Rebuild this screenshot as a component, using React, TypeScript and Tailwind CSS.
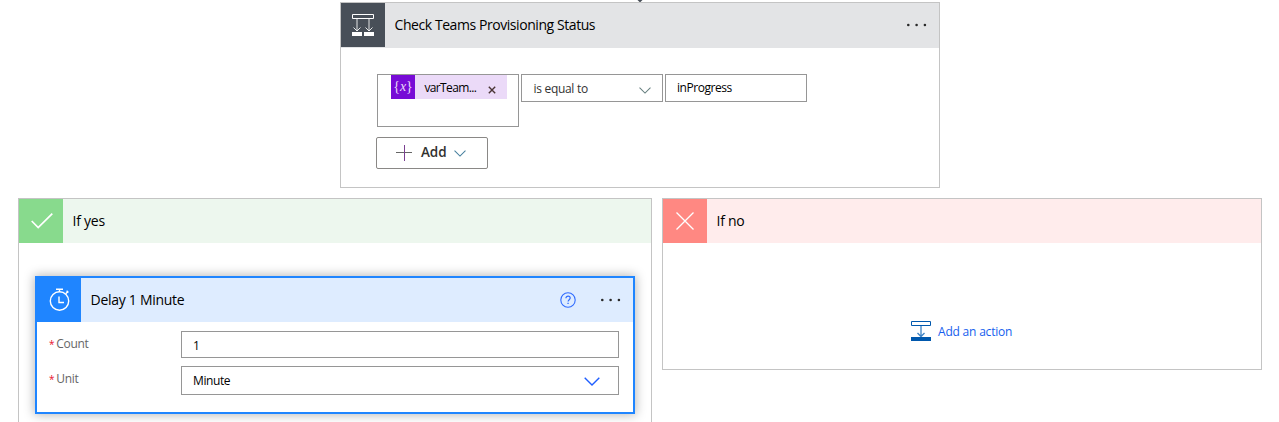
import type { ReactNode } from "react";

function Dots() {
  return (
    <svg width="22" height="4" viewBox="0 0 22 4" fill="#292929">
      <circle cx="2.3" cy="2" r="1.3" />
      <circle cx="10.6" cy="2" r="1.3" />
      <circle cx="18.9" cy="2" r="1.3" />
    </svg>
  );
}

function Chevron({ width, className }: { width: number; className: string }) {
  return (
    <svg width={width} height={width / 2 + 1} viewBox="0 0 16 9" fill="none" className={className}>
      <path d="M.7.7 8 8 15.3.7" stroke="currentColor" strokeWidth="1.4" />
    </svg>
  );
}

function ConditionIcon() {
  return (
    <svg width="22" height="22" viewBox="0 0 22 22" fill="none" stroke="#fff">
      <path d="M.5.5h21v4H.5z" />
      <path d="M5 5v12M17 5v12M1.5 13.5 5 17l3.5-3.5M13.5 13.5 17 17l3.5-3.5" strokeOpacity=".85" />
      <path d="M0 18h10v4H0zM12 18h10v4H12z" fill="#fff" stroke="none" />
    </svg>
  );
}

function StopwatchIcon() {
  return (
    <svg width="22" height="24" viewBox="0 0 22 24" fill="none" stroke="#fff" strokeWidth="1.4">
      <circle cx="10.5" cy="13" r="9.2" />
      <path d="M7 1.2h7M10.5 1v3M16.7 5.8l2-2M17.6 2.8l1.8 1.8M10 8.5v6h5" />
    </svg>
  );
}

function HelpIcon() {
  return (
    <svg width="16" height="16" viewBox="0 0 16 16" fill="none" stroke="#2f6bff">
      <circle cx="8" cy="8" r="7.2" strokeWidth="1.1" />
      <path d="M5.9 6.2c0-1.4 1-2.1 2.2-2.1s2.1.8 2.1 1.9c0 1.7-2.1 1.7-2.1 3.6" strokeWidth="1.2" />
      <path d="M7.4 11.4h1.3" strokeWidth="1.3" />
    </svg>
  );
}

function InsertIcon() {
  return (
    <svg width="20" height="20" viewBox="0 0 20 20" fill="none" stroke="#0058ad">
      <path d="M.5.5h19v4H.5z" />
      <path d="M10 5v10.5M6.5 12l3.5 3.5 3.5-3.5" stroke="#3d82c4" strokeWidth="1.3" />
      <path d="M0 16h20v4H0z" fill="#0058ad" stroke="none" />
    </svg>
  );
}

function Branch({ label, icon, tile, bar, className, children }: {
  label: string;
  icon: ReactNode;
  tile: string;
  bar: string;
  className: string;
  children: ReactNode;
}) {
  return (
    <section className={`shrink-0 border border-[#c4c4c4] bg-white ${className}`}>
      <header className={`flex h-11 items-center ${bar}`}>
        <div className={`flex size-11 items-center justify-center ${tile}`}>{icon}</div>
        <span className="ml-[9.5px] pb-[2px] text-[14px] tracking-[-0.25px]">{label}</span>
      </header>
      {children}
    </section>
  );
}

function FieldLabel({ children }: { children: ReactNode }) {
  return (
    <label className="flex w-[132px] shrink-0 pt-[4px] text-[12px] leading-[18px] tracking-[-0.3px] text-[#666]">
      <span className="mr-[2px] text-[10px] text-[#e8112d]">*</span>
      {children}
    </label>
  );
}

export default function App() {
  return (
    <main className="flex h-[422px] w-[1279px] flex-col overflow-hidden bg-white font-['Open_Sans','Noto_Sans',sans-serif] text-black">
      <div className="flex h-[2px] justify-center">
        <svg width="6" height="2" viewBox="0 0 6 2" className="ml-px">
          <path d="M.5 0h5L3.5 2h-1z" fill="#484f58" />
        </svg>
      </div>

      <section className="ml-[340px] h-[186px] w-[600px] shrink-0 border border-[#c4c4c4]">
        <header className="flex h-[45px] items-center bg-[#e3e4e6]">
          <div className="flex size-11 items-center justify-center self-start bg-[#484f58]">
            <ConditionIcon />
          </div>
          <span className="ml-[9.5px] grow pb-[2px] text-[14px] tracking-[-0.43px]">Check Teams Provisioning Status</span>
          <span className="mr-[11px] pb-[2px]"><Dots /></span>
        </header>

        <div className="ml-9 mt-[26px] flex items-start gap-[2px] text-[12px] tracking-[-0.25px]">
          <div className="h-[53px] w-[142px] border border-[#969696]">
            <div className="ml-[13px] flex h-6 w-[116px] items-center bg-[#ebdaf8]">
              <span className="flex size-6 items-center justify-center bg-[#770bd6] pb-[2px] font-['Liberation_Serif',serif] text-[14px] tracking-normal text-[#eadcf8]">
                {"{"}<i>x</i>{"}"}
              </span>
              <span className="ml-[9.5px] grow pt-[2px] tracking-[-0.65px]">varTeam...</span>
              <svg width="8" height="8" viewBox="0 0 8 8" className="mr-[11px] mt-[5px]">
                <path d="m.8.8 6.4 6.4M7.2.8.8 7.2" stroke="#4a3535" strokeWidth="1.4" />
              </svg>
            </div>
          </div>
          <div className="flex h-7 w-[142px] items-center justify-between border border-[#969696] pl-[11.5px] pr-[11px] text-[#333]">
            <span className="pt-[2px] tracking-[-0.3px]">is equal to</span>
            <Chevron width={12} className="mt-[4px] text-[#667f7f]" />
          </div>
          <div className="flex h-7 w-[142px] items-center border border-[#969696] pl-[11px] tracking-[-0.45px]">inProgress</div>
        </div>

        <button className="ml-[35px] mt-[10px] flex h-8 w-28 items-center rounded-[2px] border border-[#8a8886] pl-[19px] text-[#323130]">
          <svg width="16" height="16" viewBox="0 0 16 16" fill="none">
            <path d="M0 7.5h16" stroke="#666" />
            <path d="M8.5 0v16" stroke="#7a3f91" />
          </svg>
          <span className="ml-[9px] pb-px text-[13.5px] font-semibold tracking-[-0.1px]">Add</span>
          <Chevron width={12} className="ml-2 text-[#467f9d]" />
        </button>
      </section>

      <div className="ml-[18px] mt-[10px] flex items-start gap-[10px]">
        <Branch
          label="If yes"
          tile="bg-[#88da8d]"
          bar="bg-[#edf7ee]"
          className="h-[240px] w-[634px]"
          icon={
            <svg width="22" height="16" viewBox="0 0 22 16" fill="none" className="ml-px">
              <path d="m.7 8 6.5 6.6L21.3.7" stroke="#fff" strokeWidth="1.7" />
            </svg>
          }
        >
          <article className="ml-4 mt-[33px] h-[138px] w-[600px] border-2 border-[#1f85ff] bg-white shadow-[0_0_10px_1px_rgba(0,0,0,0.28)]">
            <header className="flex h-11 items-center bg-[#deecff]">
              <div className="flex size-11 items-center justify-center bg-[#1f85ff] pl-px">
                <StopwatchIcon />
              </div>
              <span className="ml-[9.5px] grow pb-[2px] text-[14px] tracking-[-0.28px]">Delay 1 Minute</span>
              <HelpIcon />
              <span className="ml-6 mr-[11px]"><Dots /></span>
            </header>
            <div className="ml-3 mt-[9px] flex">
              <FieldLabel>Count</FieldLabel>
              <div className="flex h-[27px] w-[438px] items-center border border-[#969696] pl-[11px] pt-[2px] text-[12px]">1</div>
            </div>
            <div className="ml-3 mt-2 flex">
              <FieldLabel>Unit</FieldLabel>
              <div className="flex h-[29px] w-[438px] items-center justify-between border border-[#969696] pl-[11px] pr-[18px] text-[12px] tracking-[-0.4px]">
                Minute
                <Chevron width={16} className="mt-[2px] text-[#1f5eff]" />
              </div>
            </div>
          </article>
        </Branch>

        <Branch
          label="If no"
          tile="bg-[#ff8882]"
          bar="bg-[#ffecec]"
          className="h-[172px] w-[600px]"
          icon={
            <svg width="18" height="18" viewBox="0 0 18 18" fill="none">
              <path d="m.5.5 17 17M17.5.5l-17 17" stroke="#fff" strokeWidth="1.3" />
            </svg>
          }
        >
          <div className="mt-[78px] flex items-center pl-[248px]">
            <InsertIcon />
            <span className="-mb-[2px] ml-[7px] text-[12px] leading-5 tracking-[-0.2px] text-[#155eee]">Add an action</span>
          </div>
        </Branch>
      </div>
    </main>
  );
}
